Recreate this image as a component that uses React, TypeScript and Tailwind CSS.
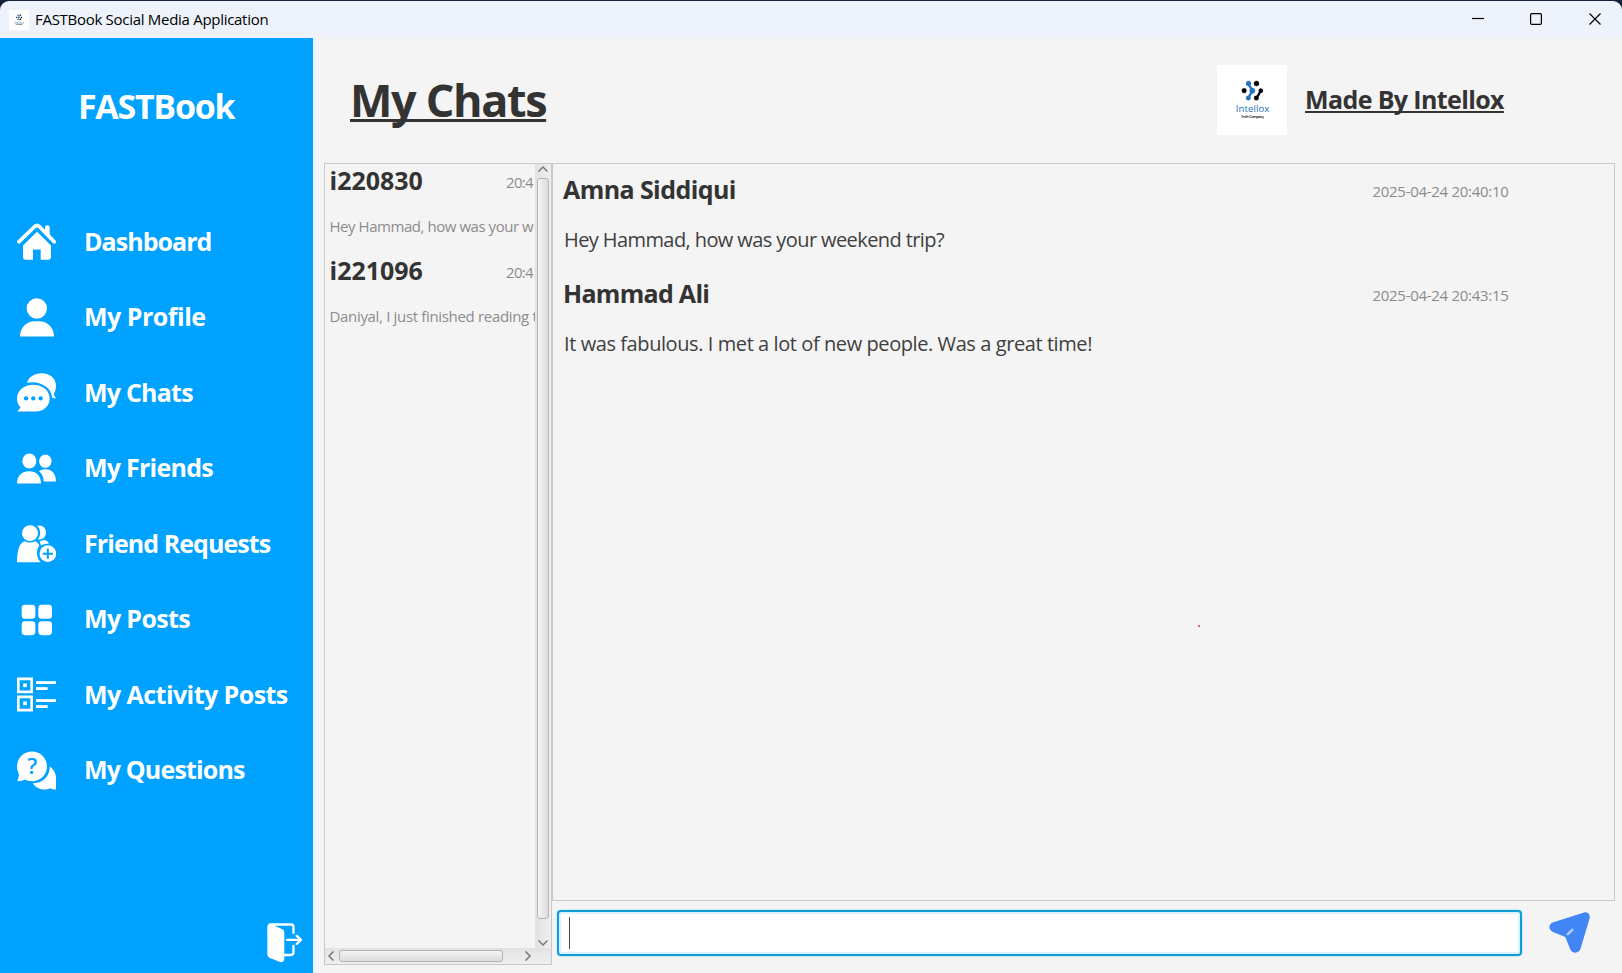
import React from "react";

function HomeIcon() {
  return (
    <svg viewBox="51 67.5 117 117" className="size-[39px]" fill="white">
      <path d="M56.500 127 L104 81 Q111 75 118 81 L162.500 127" fill="none" stroke="white" strokeWidth="11" strokeLinecap="round" />
      <path d="M135 84 Q135 77 142 77 Q149 77 149 84 V110 L135 96 Z" />
      <path d="M111 97 L153 138 V172 Q153 181 144 181 H122 V150 H99 V181 H78 Q69 181 69 172 V138 Z" />
    </svg>
  );
}

function ProfileIcon() {
  return (
    <svg viewBox="51 295.5 117 117" className="size-[39px]" fill="white">
      <circle cx="110.500" cy="327" r="30.500" />
      <path d="M60 411 C60 383 80 365 104 365 H118 C142 365 162 383 162 411 Z" />
    </svg>
  );
}

function ChatsIcon() {
  return (
    <svg viewBox="51 520.5 117 117" className="size-[39px]" fill="white">
      <path d="M81 550 C85 533 103 521 126 521 C150 521 168 537 168 559 C168 570 165 578 161 584 L168 597 L156 595 C156 565 120 542 81 550 Z" />
      <path d="M52 636 L62 624 C54 616 51 608 51 597 C51 573 73 556 100 556 C127 556 149 573 149 597 C149 620 130 636 108 636 Z" />
      <g fill="#00a2ff">
        <circle cx="78" cy="596.500" r="6.500" />
        <circle cx="100" cy="596.500" r="6.500" />
        <circle cx="122" cy="596.500" r="6.500" />
      </g>
    </svg>
  );
}

function FriendsIcon() {
  return (
    <svg viewBox="51 88.5 117 117" className="size-[39px]" fill="white">
      <ellipse cx="88" cy="124.500" rx="21" ry="22.500" />
      <path d="M51 192 C51 168 66 155 87 155 C109 155 123 168 123 192 Z" />
      <ellipse cx="136" cy="125" rx="18.500" ry="20" />
      <path d="M117 155 C123 150 130 149 137 149 C157 149 168 164 168 186 H131 C131 172 126 162 117 155 Z" />
    </svg>
  );
}

function RequestsIcon() {
  return (
    <svg viewBox="51 313.5 117 117" className="size-[39px]" fill="white">
      <circle cx="90" cy="341" r="24" />
      <path d="M111 319 C126 314 138 325 138 339 C138 353 126 362 113 360 C124 348 123 331 111 319 Z" />
      <path d="M51 428 C51 387 60 370 74 365 Q90 373 106 365 C112 367 115 372 118 379 C108 391 108 414 122 428 Z" />
      <path d="M119 366 Q128 360 137 362 Q145 366 147 373 Q133 371 123 378 Z" />
      <circle cx="143.500" cy="402.500" r="25" />
      <path d="M128 402.500 H159 M143.500 387 V418" stroke="#00a2ff" strokeWidth="6" />
    </svg>
  );
}

function PostsIcon() {
  return (
    <svg viewBox="51 540.5 117 117" className="size-[39px]" fill="white">
      <rect x="65" y="555" width="41" height="42" rx="10" />
      <rect x="115" y="555" width="41" height="42" rx="10" />
      <rect x="65" y="604" width="41" height="42" rx="10" />
      <rect x="115" y="604" width="41" height="42" rx="10" />
    </svg>
  );
}

function ActivityIcon() {
  return (
    <svg viewBox="51 106.5 117 117" className="size-[39px]" fill="white">
      <path d="M55 118 H95 V157 H55 Z M55 172 H95 V212 H55 Z" fill="none" stroke="white" strokeWidth="8" />
      <rect x="69.500" y="132" width="11" height="11" />
      <rect x="69.500" y="186" width="11" height="11" />
      <rect x="108" y="125" width="60" height="8.500" />
      <rect x="108" y="143" width="35" height="8.500" />
      <rect x="108" y="179" width="60" height="8.500" />
      <rect x="108" y="197" width="35" height="8.500" />
    </svg>
  );
}

function QuestionsIcon() {
  return (
    <svg viewBox="51 334.5 117 117" className="size-[39px]" fill="white">
      <path d="M52 425 C55 417 56 411 57 404 C53 397 51 389 51 381 C51 356 71 336 96 336 C121 336 141 356 141 381 C141 406 121 425 96 425 C88 425 81 423 75 420 C68 423 60 425 52 425 Z" />
      <path d="M149 381 C161 389 168 402 168 415 V450 C162 450 156 449 151 446 C130 455 108 447 98 431 C127 433 151 410 149 381 Z" />
      <text x="96.500" y="404" textAnchor="middle" fontFamily="Open Sans, sans-serif" fontWeight="600" fontSize="66" fill="#00a2ff">
        ?
      </text>
    </svg>
  );
}

function ExitIcon() {
  return (
    <svg viewBox="140 98 106 119" className="h-[39.7px] w-[35.3px]" fill="none" stroke="white" strokeWidth="7" strokeLinecap="round" strokeLinejoin="round">
      <path d="M148 102.500 H212 Q219.500 102.500 219.500 110 V128" />
      <path d="M219.500 167 V186 Q219.500 194 212 194 H192" />
      <path d="M200 148.500 H240 M229 136 L242 148.500 L229 161" />
      <path d="M141 109 Q142 99 152 101 L186 117 Q192 120 192 127 V205 Q192 215 181 216 L147 202 Q141 199 141 192 Z" fill="white" stroke="none" />
    </svg>
  );
}

function SendIcon() {
  return (
    <svg viewBox="446 96 123 123" className="size-[41px]">
      <path
        d="M549 98 C561 94 571 103 568 115 L541 205 C536 222 515 222 509 206 L495 171 L458 156 C443 149 444 132 459 127 Z"
        fill="#4285f4"
      />
      <path d="M502.500 162.500 L516 149.500" stroke="#b3cefb" strokeWidth="7.500" strokeLinecap="round" />
    </svg>
  );
}

function Logo({ className }: { className: string }) {
  return (
    <svg viewBox="51 45 210 210" className={className}>
      <rect x="51" y="45" width="210" height="210" fill="white" />
      <g fill="#2472bd" stroke="#2472bd">
        <path d="M145 101 L157 122 L145 144" fill="none" strokeWidth="7" />
        <circle cx="145.500" cy="100.500" r="7.500" />
        <circle cx="157" cy="122" r="8" />
        <circle cx="145" cy="144" r="7" />
      </g>
      <g fill="black" stroke="black">
        <path d="M183 122 L169 145" strokeWidth="7" />
        <circle cx="169.500" cy="100.500" r="7.500" />
        <circle cx="132.500" cy="122" r="7" />
        <circle cx="182.500" cy="122" r="6.500" />
        <circle cx="169" cy="144" r="7" />
      </g>
      <text x="157.500" y="187" textAnchor="middle" textLength="101" fontFamily="Open Sans, sans-serif" fontSize="29" fill="#2472bd">
        Intellox
      </text>
      <text x="157.500" y="204" textAnchor="middle" textLength="69" fontFamily="Open Sans, sans-serif" fontWeight="600" fontSize="11" fill="black">
        Tech Company
      </text>
    </svg>
  );
}

const navItems = [
  { label: "Dashboard", icon: HomeIcon, tracking: "tracking-[-0.95px]" },
  { label: "My Profile", icon: ProfileIcon, tracking: "tracking-[-0.5px]" },
  { label: "My Chats", icon: ChatsIcon, tracking: "tracking-[-0.78px]" },
  { label: "My Friends", icon: FriendsIcon, tracking: "tracking-[-0.75px]" },
  { label: "Friend Requests", icon: RequestsIcon, tracking: "tracking-[-0.93px]" },
  { label: "My Posts", icon: PostsIcon, tracking: "tracking-[-0.65px]" },
  { label: "My Activity Posts", icon: ActivityIcon, tracking: "tracking-[-0.56px]" },
  { label: "My Questions", icon: QuestionsIcon, tracking: "tracking-[-0.83px]" },
];

const conversations = [
  { id: "i220830", time: "20:4", preview: "Hey Hammad, how was your w", tracking: "tracking-[-0.45px]" },
  { id: "i221096", time: "20:4", preview: "Daniyal, I just finished reading t", tracking: "tracking-[-0.33px]" },
];

const messages = [
  {
    author: "Amna Siddiqui",
    time: "2025-04-24 20:40:10",
    text: "Hey Hammad, how was your weekend trip?",
    tracking: "tracking-[-0.58px]",
    textTracking: "tracking-[-0.59px]",
  },
  {
    author: "Hammad Ali",
    time: "2025-04-24 20:43:15",
    text: "It was fabulous. I met a lot of new people. Was a great time!",
    tracking: "tracking-[-0.7px]",
    textTracking: "tracking-[-0.42px]",
  },
];

function TitleBar() {
  return (
    <div className="h-[38px] shrink-0 bg-[#16213d] pt-px">
      <div className="flex h-full items-center rounded-t-[9px] bg-[#eef3fb] pl-[9px]">
        <Logo className="size-5" />
        <span className="ml-[6px] pb-px text-[15px] tracking-[-0.29px] text-black">FASTBook Social Media Application</span>
        <svg viewBox="0 0 130 14" className="mr-[20px] mb-px ml-auto h-[14px] w-[130px]" fill="none" stroke="black" strokeWidth="1.200">
          <path d="M0 6.500 H12" />
          <rect x="58.600" y="1.600" width="10.800" height="10.800" rx="1.200" />
          <path d="M117.500 1.500 L128.500 12.500 M128.500 1.500 L117.500 12.500" />
        </svg>
      </div>
    </div>
  );
}

function Sidebar() {
  return (
    <aside className="flex w-[313px] shrink-0 flex-col bg-[#00a2ff] font-bold text-white">
      <div className="mt-[43px] h-[50px] pl-[78px] text-[34px] leading-[50px] tracking-[-1.3px]">FASTBook</div>
      <nav className="mt-[73px]">
        {navItems.map(({ label, icon: Icon, tracking }) => (
          <div key={label} className="flex h-[75.5px] items-center gap-[28px] pl-[17px]">
            <Icon />
            <span className={`pb-[1.6px] text-[25px] leading-[36px] ${tracking}`}>{label}</span>
          </div>
        ))}
      </nav>
      <div className="mt-auto mr-[11px] mb-[10.500px] flex justify-end">
        <ExitIcon />
      </div>
    </aside>
  );
}

function Chevron({ d }: { d: string }) {
  return (
    <svg viewBox="0 0 10 10" className="size-[10px] shrink-0" fill="none" stroke="#777777" strokeWidth="1.500">
      <path d={d} />
    </svg>
  );
}

function ConversationList() {
  return (
    <section className="flex w-[228px] shrink-0 flex-col border border-[#c8c8c8]">
      <div className="flex min-h-0 flex-1">
        <div className="min-w-0 flex-1 overflow-hidden pt-px pl-[4.500px] whitespace-nowrap">
          {conversations.map((c) => (
            <div key={c.id} className="h-[90px]">
              <div className="flex h-[30px] leading-[30px]">
                <span className="w-[176.500px] text-[25px] font-bold text-[#333333]">{c.id}</span>
                <span className="pt-[2px] text-[15px] tracking-[-0.7px] text-[#8c8c8c]">{c.time}</span>
              </div>
              <p className={`mt-[21px] text-[15px] leading-5 text-[#8c8c8c] ${c.tracking}`}>{c.preview}</p>
            </div>
          ))}
        </div>
        <div className="flex w-4 flex-col items-center bg-linear-to-r from-[#e2e2e2] to-[#efefef]">
          <div className="flex h-[14px] items-start">
            <Chevron d="M0.500 7.500 L5 3 L9.500 7.500" />
          </div>
          <div className="w-3 flex-1 rounded-[3px] border border-[#b4b4b4] bg-linear-to-r from-[#f4f4f4] to-[#dcdcdc]" />
          <div className="flex h-[29px] items-end">
            <Chevron d="M0.500 2.500 L5 7 L9.500 2.500" />
          </div>
        </div>
      </div>
      <div className="flex h-4 items-center bg-linear-to-b from-[#e2e2e2] to-[#efefef] pl-[1px]">
        <Chevron d="M7.500 0.500 L3 5 L7.500 9.500" />
        <div className="ml-[3px] h-3 w-[164px] rounded-[3px] border border-[#b4b4b4] bg-linear-to-b from-[#f4f4f4] to-[#dcdcdc]" />
        <div className="ml-5">
          <Chevron d="M2.500 0.500 L7 5 L2.500 9.500" />
        </div>
      </div>
    </section>
  );
}

function ChatThread() {
  return (
    <section className="relative h-[738px] border border-[#c8c8c8] pt-[7px] pl-[10px]">
      {messages.map((m) => (
        <article key={m.time} className="h-[104px] whitespace-nowrap">
          <div className="flex h-9 leading-9">
            <h2 className={`w-[809.500px] text-[25px] font-bold text-[#333333] ${m.tracking}`}>{m.author}</h2>
            <time className="pt-[2px] text-[15px] tracking-[-0.29px] text-[#8c8c8c]">{m.time}</time>
          </div>
          <p className={`mt-[19px] pl-px text-[20px] leading-7 text-[#404040] ${m.textTracking}`}>{m.text}</p>
        </article>
      ))}
      <span className="absolute top-[461px] left-[645px] size-[2px] rounded-full bg-[#e0303c]" />
    </section>
  );
}

export default function App() {
  return (
    <div className="flex h-[973px] w-[1622px] flex-col overflow-hidden bg-[#f4f4f4] font-['Open_Sans',sans-serif]">
      <TitleBar />
      <div className="flex min-h-0 flex-1">
        <Sidebar />
        <main className="flex flex-1 flex-col">
          <header className="flex h-[125px] shrink-0 items-start pl-[37px] text-[#333333]">
            <h1 className="mt-8 text-[45px] leading-[60px] font-bold tracking-[-1.36px] underline decoration-[2.5px] underline-offset-[2px] [text-decoration-skip-ink:none]">
              My Chats
            </h1>
            <div className="mt-[27px] mr-[118px] ml-auto flex h-[70px] items-center gap-[18px]">
              <Logo className="size-[70px]" />
              <span className="w-[199px] pb-[2px] text-[25px] leading-9 font-bold tracking-[-0.62px] whitespace-nowrap underline decoration-[1.5px] underline-offset-[2px] [text-decoration-skip-ink:none]">
                Made By Intellox
              </span>
            </div>
          </header>
          <div className="flex h-[802px] pl-[11px]">
            <ConversationList />
            <div className="flex w-[1063px] flex-col">
              <ChatThread />
              <div className="mt-[9px] flex items-start pl-[5px]">
                <div className="flex h-[46px] w-[965px] items-center rounded-[4px] border-2 border-[#0f9fd6] bg-white pl-[10px] shadow-[inset_0_0_0_2px_#dcf1f8,0_0_1px_1px_#cfe9f3]">
                  <span className="h-8 w-px bg-[#444444]" />
                </div>
                <div className="mt-[2px] ml-[27px]">
                  <SendIcon />
                </div>
              </div>
            </div>
          </div>
        </main>
      </div>
    </div>
  );
}
